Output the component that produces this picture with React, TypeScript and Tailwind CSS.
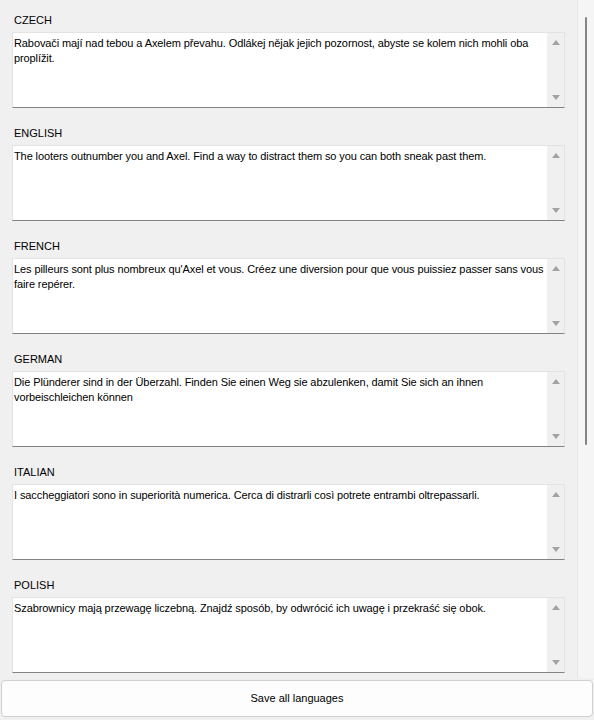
import React from 'react';

const entries = [
  { lang: 'CZECH', text: 'Rabovači mají nad tebou a Axelem převahu. Odlákej nějak jejich pozornost, abyste se kolem nich mohli oba proplížit.' },
  { lang: 'ENGLISH', text: 'The looters outnumber you and Axel. Find a way to distract them so you can both sneak past them.' },
  { lang: 'FRENCH', text: "Les pilleurs sont plus nombreux qu'Axel et vous. Créez une diversion pour que vous puissiez passer sans vous faire repérer." },
  { lang: 'GERMAN', text: 'Die Plünderer sind in der Überzahl. Finden Sie einen Weg sie abzulenken, damit Sie sich an ihnen vorbeischleichen können' },
  { lang: 'ITALIAN', text: 'I saccheggiatori sono in superiorità numerica. Cerca di distrarli così potrete entrambi oltrepassarli.' },
  { lang: 'POLISH', text: 'Szabrownicy mają przewagę liczebną. Znajdź sposób, by odwrócić ich uwagę i przekraść się obok.' },
];

function Arrow({ up }: { up?: boolean }) {
  return (
    <svg width="8" height="6" viewBox="0 0 8 6">
      <path d={up ? 'M0 6 L4 1 L8 6 Z' : 'M0 0 L4 5 L8 0 Z'} fill="#a3a3a3" />
    </svg>
  );
}

function TextBox({ text }: { text: string }) {
  return (
    <div className="flex h-[76px] bg-white border border-[#e3e3e3] border-b-[#838383]">
      <div className="flex-1 pl-[1px] pt-[3px] text-[11px] leading-[15px] tracking-[-0.1px] text-black">{text}</div>
      <div className="w-[17px] bg-[#f0f0f0] flex flex-col items-center justify-between py-[6px]">
        <Arrow up />
        <Arrow />
      </div>
    </div>
  );
}

export default function App() {
  return (
    <div className="w-[594px] h-[720px] bg-[#f0f0f0] flex flex-col overflow-hidden" style={{ fontFamily: '"Liberation Sans", Arial, sans-serif' }}>
      <div className="flex h-[678px]">
        <div className="flex-1 pl-[12px] pr-[12px] pt-[13px] flex flex-col gap-[18px] overflow-hidden">
          {entries.map((e) => (
            <div key={e.lang} className="flex flex-col">
              <div className="text-[11px] leading-[14px] text-black pl-[2px] mb-[5px]">{e.lang}</div>
              <TextBox text={e.text} />
            </div>
          ))}
        </div>
        <div className="w-[17px] bg-[#f5f5f5] border-l border-[#e6e6e6] flex justify-center pt-[17px]">
          <div className="w-[2px] h-[428px] bg-[#858585] rounded-full" />
        </div>
      </div>
      <div className="px-[1px] pt-[2px]">
        <button className="w-full h-[37px] bg-[#fdfdfd] border border-[#d0d0d0] rounded-[4px] text-[11px] text-black">
          Save all languages
        </button>
      </div>
    </div>
  );
}
